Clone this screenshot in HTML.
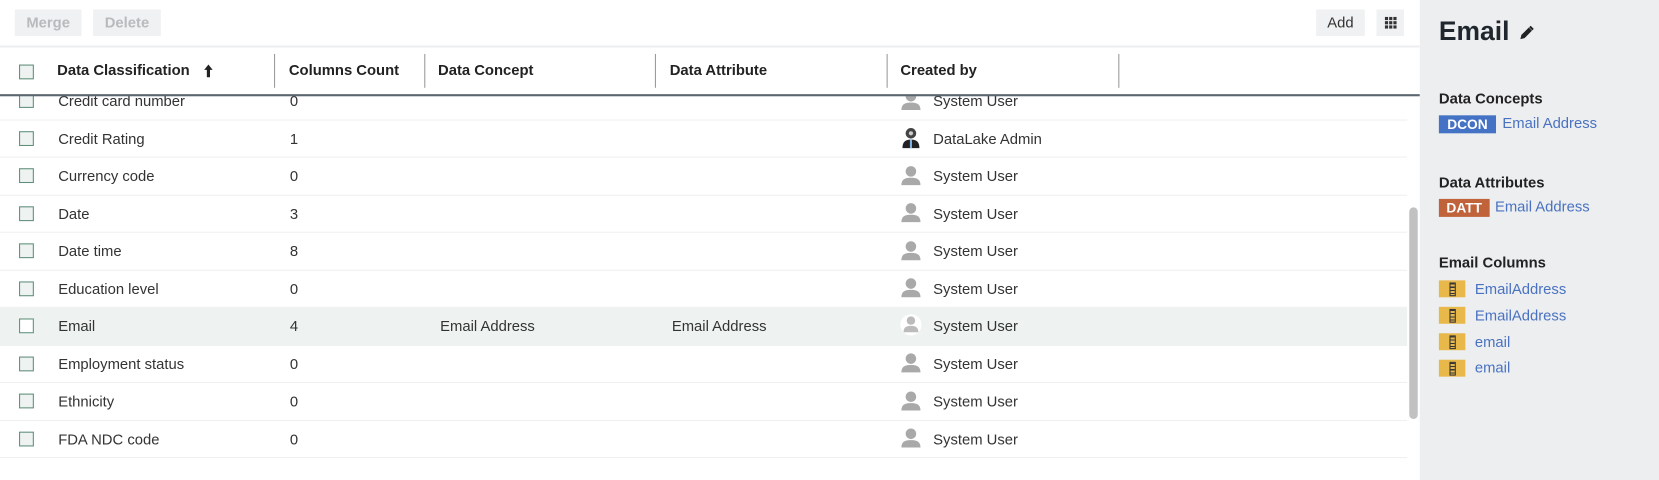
<!DOCTYPE html>
<html><head><meta charset="utf-8"><style>
*{box-sizing:border-box;margin:0;padding:0}
html,body{width:1659px;height:454px;overflow:hidden;background:#fff}
#w{position:absolute;left:0;top:0;width:1568px;height:430px;transform:scale(1.058);transform-origin:0 0;font-family:"Liberation Sans",sans-serif;color:#333;font-size:14px}
.abs{position:absolute}
.btn{position:absolute;top:9px;height:25px;background:#f0f1f2;font-size:14px;line-height:25px;text-align:center}
.hd{position:absolute;top:58px;font-weight:bold;font-size:14px;color:#222}
.div{position:absolute;top:51px;width:1px;height:32px;background:#999}
.row{position:absolute;left:0;width:1330px;height:35.5px;border-bottom:1px solid #f0f0f0}
.row span{position:absolute;top:9px;white-space:nowrap}
.cb{position:absolute;left:18px;width:14px;height:14px;border:1px solid #5f8f7a;background:#eef3f1}
.panel{position:absolute;left:1342px;top:0;width:240px;height:454px;background:#eceef0}
.sh{position:absolute;left:18px;font-weight:bold;font-size:14px;color:#222}
.lnk{color:#4a72c0}
.badge{position:absolute;left:18px;height:17px;color:#fff;font-weight:bold;font-size:13px;line-height:17px;text-align:center}
.col{position:absolute;left:18px;width:25px;height:16px;background:#e8b84a}
.col:after{content:"";position:absolute;left:10px;top:2px;width:4px;height:11px;border:1px solid #333;background:repeating-linear-gradient(#333 0 1px,#e8b84a 1px 3px)}
</style></head><body><div id="w">
<div class="btn" style="left:14px;width:63px;color:#b8bbbe;font-weight:bold">Merge</div>
<div class="btn" style="left:88px;width:64px;color:#b8bbbe;font-weight:bold">Delete</div>
<div class="btn" style="left:1244px;width:46px;color:#333">Add</div>
<div class="btn" style="left:1301px;width:26px"><svg width="26" height="25" viewBox="0 0 26 25"><g fill="#333"><rect x="8" y="7" width="3" height="3"/><rect x="12" y="7" width="3" height="3"/><rect x="16" y="7" width="3" height="3"/><rect x="8" y="11" width="3" height="3"/><rect x="12" y="11" width="3" height="3"/><rect x="16" y="11" width="3" height="3"/><rect x="8" y="15" width="3" height="3"/><rect x="12" y="15" width="3" height="3"/><rect x="16" y="15" width="3" height="3"/></g></svg></div>
<div class="abs" style="left:0;top:43px;width:1342px;height:2px;background:#eceef0"></div>

<div class="abs" style="left:0;top:78px;width:1342px;height:376px;overflow:hidden">
<div style="position:relative;top:-78px">
<div class="row" style="top:78px"><div class="cb" style="top:10px"></div><span style="left:55px">Credit card number</span><span style="left:274px">0</span><span style="left:882px">System User</span></div>
<div class="row" style="top:113.5px"><div class="cb" style="top:10px"></div><span style="left:55px">Credit Rating</span><span style="left:274px">1</span><span style="left:882px">DataLake Admin</span></div>
<div class="row" style="top:149px"><div class="cb" style="top:10px"></div><span style="left:55px">Currency code</span><span style="left:274px">0</span><span style="left:882px">System User</span></div>
<div class="row" style="top:184.5px"><div class="cb" style="top:10px"></div><span style="left:55px">Date</span><span style="left:274px">3</span><span style="left:882px">System User</span></div>
<div class="row" style="top:220px"><div class="cb" style="top:10px"></div><span style="left:55px">Date time</span><span style="left:274px">8</span><span style="left:882px">System User</span></div>
<div class="row" style="top:255.5px"><div class="cb" style="top:10px"></div><span style="left:55px">Education level</span><span style="left:274px">0</span><span style="left:882px">System User</span></div>
<div class="row" style="top:291px;background:#eef3f1"><div class="cb" style="top:10px;background:#fff"></div><span style="left:55px">Email</span><span style="left:274px">4</span><span style="left:416px">Email Address</span><span style="left:635px">Email Address</span><span style="left:882px">System User</span></div>
<div class="row" style="top:326.5px"><div class="cb" style="top:10px"></div><span style="left:55px">Employment status</span><span style="left:274px">0</span><span style="left:882px">System User</span></div>
<div class="row" style="top:362px"><div class="cb" style="top:10px"></div><span style="left:55px">Ethnicity</span><span style="left:274px">0</span><span style="left:882px">System User</span></div>
<div class="row" style="top:397.5px"><div class="cb" style="top:10px"></div><span style="left:55px">FDA NDC code</span><span style="left:274px">0</span><span style="left:882px">System User</span></div>
</div></div>

<svg class="abs" style="left:850px;top:0" width="24" height="454">
<defs><g id="u"><circle cx="11" cy="6" r="5" fill="#a9a9a9"/><path d="M2 19 C2 13 6 12 11 12 C16 12 20 13 20 19 Z" fill="#a9a9a9"/></g></defs>
<use href="#u" y="85"/><use href="#u" y="156"/><use href="#u" y="191"/><use href="#u" y="227"/><use href="#u" y="262"/>
<circle cx="11" cy="307" r="10" fill="#fff"/><g transform="translate(0,297)"><circle cx="11" cy="6" r="4" fill="#bbb"/><path d="M4 17 C4 12 7 11 11 11 C15 11 18 12 18 17Z" fill="#bbb"/></g>
<use href="#u" y="333"/><use href="#u" y="369"/><use href="#u" y="404"/>
<g transform="translate(0,120)"><circle cx="11" cy="6" r="5" fill="#444"/><circle cx="11" cy="6" r="2" fill="#ccc"/><path d="M3 20 C3 13 7 12 11 12 C15 12 19 13 19 20 Z" fill="#222"/><rect x="10" y="12" width="2" height="8" fill="#7fb0e0"/></g>
</svg>

<div class="abs" style="left:0;top:45px;width:1342px;height:45px;background:#fff"></div>
<div class="abs" style="left:0;top:89px;width:1342px;height:2px;background:#5b6670"></div>
<div class="cb" style="top:61px"></div>
<div class="hd" style="left:54px">Data Classification</div>
<svg class="abs" style="left:192px;top:60px" width="10" height="14"><path d="M5 1 L9 6 L6.5 6 L6.5 13 L3.5 13 L3.5 6 L1 6Z" fill="#222"/></svg>
<div class="div" style="left:259px"></div>
<div class="hd" style="left:273px">Columns Count</div>
<div class="div" style="left:401px"></div>
<div class="hd" style="left:414px">Data Concept</div>
<div class="div" style="left:619px"></div>
<div class="hd" style="left:633px">Data Attribute</div>
<div class="div" style="left:838px"></div>
<div class="hd" style="left:851px">Created by</div>
<div class="div" style="left:1057px"></div>

<div class="abs" style="left:1332px;top:196px;width:8px;height:200px;background:#c1c1c1;border-radius:4px"></div>

<div class="panel">
<div class="abs" style="left:18px;top:16px;font-size:25px;font-weight:bold;color:#1f262d">Email</div>
<svg class="abs" style="left:94px;top:24px" width="14" height="14"><path d="M1 13 L2 9 L9 2 L12 5 L5 12 Z" fill="#222"/><path d="M10 1 L13 4" stroke="#222" stroke-width="2"/></svg>
<div class="sh" style="top:85px">Data Concepts</div>
<div class="badge" style="top:109px;width:54px;background:#4472c4">DCON</div>
<div class="abs lnk" style="left:78px;top:108px">Email Address</div>
<div class="sh" style="top:164px">Data Attributes</div>
<div class="badge" style="top:188px;width:48px;background:#c0623a">DATT</div>
<div class="abs lnk" style="left:71px;top:187px">Email Address</div>
<div class="sh" style="top:240px">Email Columns</div>
<div class="col" style="top:265px"></div><div class="abs lnk" style="left:52px;top:265px">EmailAddress</div>
<div class="col" style="top:290px"></div><div class="abs lnk" style="left:52px;top:290px">EmailAddress</div>
<div class="col" style="top:315px"></div><div class="abs lnk" style="left:52px;top:315px">email</div>
<div class="col" style="top:340px"></div><div class="abs lnk" style="left:52px;top:339px">email</div>
</div>
</div></body></html>
